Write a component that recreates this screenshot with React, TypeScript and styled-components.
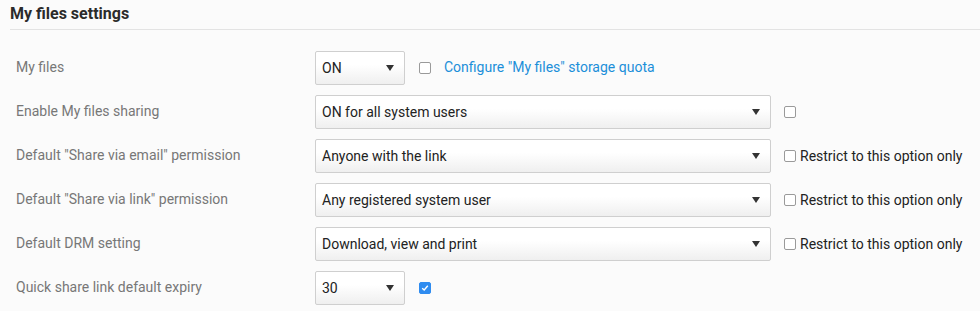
import styled, { createGlobalStyle } from "styled-components";

const GlobalStyle = createGlobalStyle`
  body {
    margin: 0;
    background-color: #fbfbfb;
    font-family: Roboto, "Liberation Sans", Arial, sans-serif;
  }
`;

const StyledPage = styled.div`
  padding: 0 0 0 10px;
`;

const StyledTitle = styled.div`
  font-size: 16px;
  font-weight: bold;
  color: #2b2b2b;
  height: 29px;
  line-height: 27px;
  border-bottom: 1px solid #e3e3e3;
  margin-bottom: 21px;
`;

const StyledRow = styled.div`
  display: flex;
  align-items: center;
  height: 34px;
  margin-bottom: 10px;
`;

const StyledLabel = styled.div`
  width: 299px;
  padding-left: 6px;
  font-size: 14px;
  color: #777;
  margin-top: -3px;
`;

const StyledSelect = styled.div<{ wide?: boolean }>`
  display: flex;
  align-items: center;
  justify-content: space-between;
  box-sizing: border-box;
  width: ${props => (props.wide ? "456px" : "90px")};
  height: 34px;
  padding: 0 10px 0 6px;
  border: 1px solid #cfcfcf;
  border-radius: 2px;
  background: linear-gradient(#ffffff 40%, #efefef);
  font-size: 14px;
  color: #222;
`;

const StyledArrow = styled.span`
  width: 0;
  height: 0;
  border-left: 4px solid transparent;
  border-right: 4px solid transparent;
  border-top: 6px solid #333;
`;

const StyledCheckbox = styled.span<{ checked?: boolean; gap: string }>`
  display: inline-flex;
  align-items: center;
  justify-content: center;
  box-sizing: border-box;
  width: 12px;
  height: 12px;
  margin-left: ${props => props.gap};
  border-radius: 2px;
  border: 1px solid ${props => (props.checked ? "#2f8cf0" : "#9a9a9a")};
  background-color: ${props => (props.checked ? "#2f8cf0" : "#fff")};
`;

const StyledLink = styled.a`
  margin-left: 13px;
  font-size: 14px;
  color: #1b8fd9;
  text-decoration: none;
  margin-top: -2px;
`;

const StyledOption = styled.span`
  margin-left: 4px;
  font-size: 14px;
  color: #222;
  margin-top: -1px;
`;

function Check() {
    return (
        <svg width="8" height="8" viewBox="0 0 8 8">
            <path d="M1.2 4.2 L3.2 6 L6.8 1.8" stroke="#fff" strokeWidth="1.4" fill="none"/>
        </svg>
    );
}

function Select({value, wide}: { value: string; wide?: boolean }) {
    return (
        <StyledSelect wide={wide}>
            {value}
            <StyledArrow/>
        </StyledSelect>
    );
}

const restricted = [
    {label: 'Default "Share via email" permission', value: "Anyone with the link"},
    {label: 'Default "Share via link" permission', value: "Any registered system user"},
    {label: "Default DRM setting", value: "Download, view and print"},
];

export default function App() {
    return (
        <StyledPage>
            <GlobalStyle/>
            <StyledTitle>My files settings</StyledTitle>
            <StyledRow>
                <StyledLabel>My files</StyledLabel>
                <Select value="ON"/>
                <StyledCheckbox gap="14px"/>
                <StyledLink href="#">Configure "My files" storage quota</StyledLink>
            </StyledRow>
            <StyledRow>
                <StyledLabel>Enable My files sharing</StyledLabel>
                <Select value="ON for all system users" wide/>
                <StyledCheckbox gap="13px"/>
            </StyledRow>
            {restricted.map(r => (
                <StyledRow key={r.label}>
                    <StyledLabel>{r.label}</StyledLabel>
                    <Select value={r.value} wide/>
                    <StyledCheckbox gap="13px"/>
                    <StyledOption>Restrict to this option only</StyledOption>
                </StyledRow>
            ))}
            <StyledRow>
                <StyledLabel>Quick share link default expiry</StyledLabel>
                <Select value="30"/>
                <StyledCheckbox gap="14px" checked><Check/></StyledCheckbox>
            </StyledRow>
        </StyledPage>
    );
}
